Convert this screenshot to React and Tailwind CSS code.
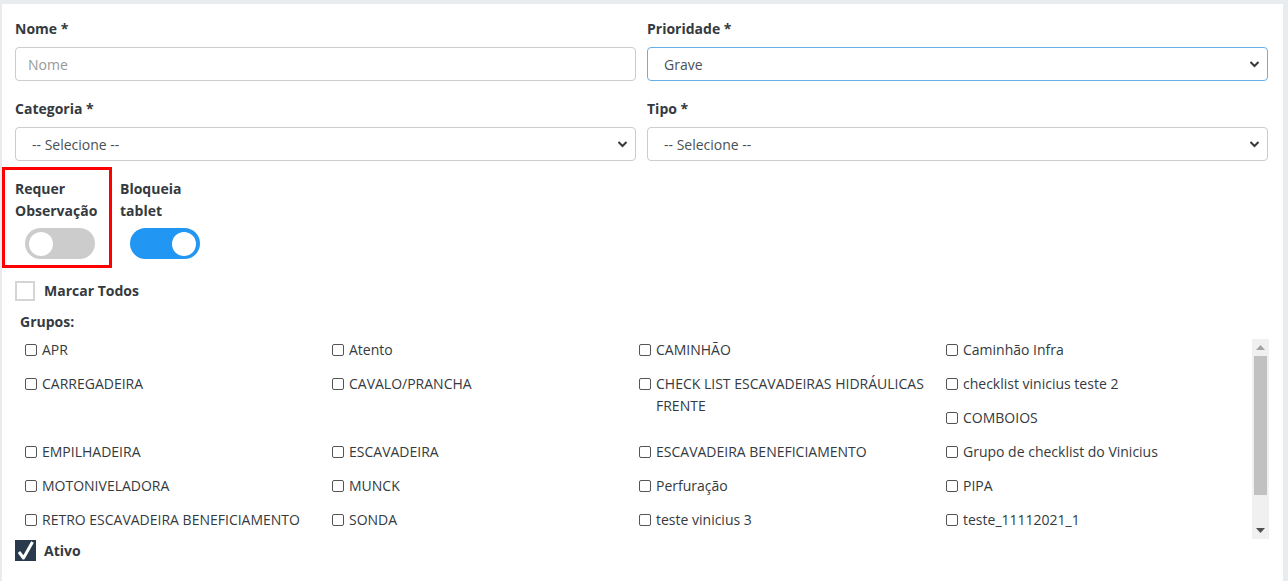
import { useState } from "react";

const grupos = [
  { label: "APR" },
  { label: "Atento" },
  { label: "CAMINHÃO" },
  { label: "Caminhão Infra" },
  { label: "CARREGADEIRA" },
  { label: "CAVALO/PRANCHA" },
  { label: "CHECK LIST ESCAVADEIRAS HIDRÁULICAS FRENTE", tall: true },
  { label: "checklist vinicius teste 2" },
  { label: "COMBOIOS", col4: true },
  { label: "EMPILHADEIRA" },
  { label: "ESCAVADEIRA" },
  { label: "ESCAVADEIRA BENEFICIAMENTO" },
  { label: "Grupo de checklist do Vinicius" },
  { label: "MOTONIVELADORA" },
  { label: "MUNCK" },
  { label: "Perfuração" },
  { label: "PIPA" },
  { label: "RETRO ESCAVADEIRA BENEFICIAMENTO" },
  { label: "SONDA" },
  { label: "teste vinicius 3" },
  { label: "teste_11112021_1" },
];

function Chevron() {
  return (
    <svg
      className="pointer-events-none absolute right-[8px] top-1/2 -translate-y-1/2"
      width="11"
      height="8"
      viewBox="0 0 11 8"
    >
      <path d="M1.5 2l4 4 4-4" fill="none" stroke="#343a40" strokeWidth="2" />
    </svg>
  );
}

function Select({ value, focused }) {
  return (
    <div className="relative">
      <div
        className={`flex h-[34px] items-center rounded-[4px] border bg-white pl-[16px] text-[14px] text-[#495057] ${
          focused ? "border-[#66afe9]" : "border-[#ccc]"
        }`}
      >
        {value}
      </div>
      <Chevron />
    </div>
  );
}

function Toggle({ on }) {
  return (
    <div
      className={`flex h-[31px] w-[70px] items-center rounded-full px-[4px] ${
        on ? "justify-end bg-[#2196f3]" : "justify-start bg-[#ccc]"
      }`}
    >
      <div className="h-[24px] w-[24px] rounded-full bg-white" />
    </div>
  );
}

function Field({ label, children }) {
  return (
    <div className="mb-[17px]">
      <div className="mb-[8px] text-[14px] font-bold leading-[21px] text-[#343a40]">{label}</div>
      {children}
    </div>
  );
}

// classic scrollbar look, drawn beside the list
function ScrollBar() {
  return (
    <div className="flex w-[17px] shrink-0 flex-col items-center bg-[#f0f0f0]">
      <div className="flex h-[17px] items-center justify-center">
        <svg width="9" height="5" viewBox="0 0 9 5">
          <path d="M0 5L4.5 0 9 5z" fill="#a3a3a3" />
        </svg>
      </div>
      <div className="h-[139px] w-[13px] bg-[#c1c1c1]" />
      <div className="flex-1" />
      <div className="flex h-[17px] items-center justify-center">
        <svg width="9" height="5" viewBox="0 0 9 5">
          <path d="M0 0l4.5 5L9 0z" fill="#505050" />
        </svg>
      </div>
    </div>
  );
}

export default function App() {
  const [ativo] = useState(true);

  return (
    <div
      className="min-h-[581px] bg-[#e9ecef] pl-[2px] pr-[5px] pt-[4px]"
      style={{ fontFamily: '"Open Sans", "Noto Sans", sans-serif' }}
    >
      <div className="h-[577px] bg-white pl-[13px] pr-[15px] pt-[14px]">
        <div className="grid grid-cols-2 gap-x-[11px]">
          <Field label="Nome *">
            <div className="flex h-[34px] items-center rounded-[4px] border border-[#ccc] bg-white pl-[12px] text-[14px] text-[#999]">
              Nome
            </div>
          </Field>
          <Field label="Prioridade *">
            <Select value="Grave" focused />
          </Field>
          <Field label="Categoria *">
            <Select value="-- Selecione --" />
          </Field>
          <Field label="Tipo *">
            <Select value="-- Selecione --" />
          </Field>
        </div>

        <div className="-mt-[11px] flex">
          <div className="-ml-[13px] w-[110px] border-[3px] border-[#f00] pb-[6px] pl-[10px] pt-[8px]">
            <div className="mb-[6px] text-[14px] font-bold leading-[22px] text-[#343a40]">
              Requer
              <br />
              Observação
            </div>
            <div className="ml-[10px]">
              <Toggle on={false} />
            </div>
          </div>
          <div className="ml-[8px] pt-[11px]">
            <div className="mb-[6px] text-[14px] font-bold leading-[22px] text-[#343a40]">
              Bloqueia
              <br />
              tablet
            </div>
            <div className="ml-[10px]">
              <Toggle on />
            </div>
          </div>
        </div>

        <div className="mt-[13px] flex items-center">
          <div className="h-[20px] w-[20px] border-2 border-[#d5d5d5] bg-white" />
          <span className="ml-[9px] text-[14px] font-bold leading-[20px] text-[#343a40]">Marcar Todos</span>
        </div>

        <div className="ml-[5px] mt-[10px] text-[14px] font-bold leading-[21px] text-[#343a40]">Grupos:</div>

        <div className="-mr-[1px] ml-[5px] mt-[7px] flex h-[200px]">
          <div className="min-w-0 flex-1 overflow-y-auto [scrollbar-width:none]">
            <div className="grid grid-cols-4 auto-rows-[34px] pb-[34px] pr-[4px]">
              {grupos.map((g) => (
                <div
                  key={g.label}
                  className={`flex items-start pl-[5px] pr-[10px] ${g.tall ? "row-span-2" : ""} ${
                    g.col4 ? "col-start-4" : ""
                  }`}
                >
                  <span className="mt-[5px] h-[12px] w-[12px] shrink-0 rounded-[2px] border border-[#555] bg-white" />
                  <span className="ml-[5px] text-[14px] leading-[22px] text-[#343a40]">{g.label}</span>
                </div>
              ))}
            </div>
          </div>
          <ScrollBar />
        </div>

        <div className="mt-[1px] flex items-center">
          <div className="relative h-[21px] w-[21px] bg-[#2a3a4d]">
            {ativo && (
              <svg className="absolute left-[2px] top-[1px]" width="18" height="20" viewBox="0 0 18 20">
                <path d="M2 11l4.5 6L15.5 1" fill="none" stroke="#fff" strokeWidth="3" strokeLinejoin="round" />
              </svg>
            )}
          </div>
          <span className="ml-[8px] text-[14px] font-bold leading-[20px] text-[#343a40]">Ativo</span>
        </div>
      </div>
    </div>
  );
}
